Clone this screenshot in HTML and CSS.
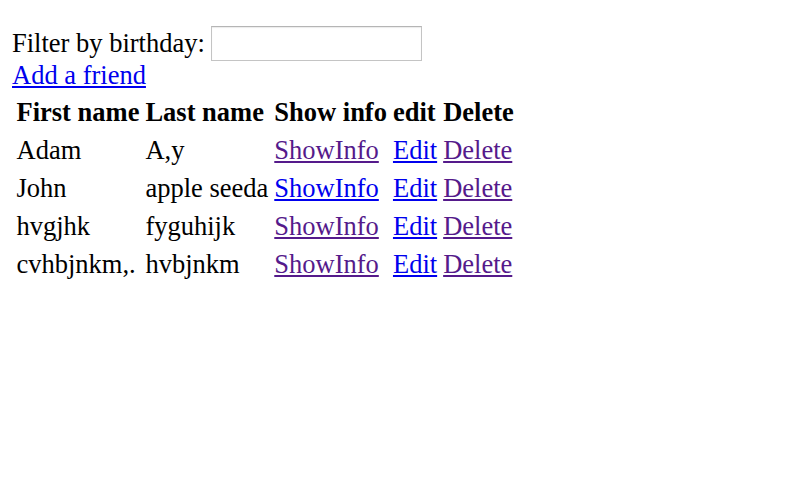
FILE: index.html
```html
<!DOCTYPE html>
<html>
<head>
<meta charset="utf-8">
<link rel="stylesheet" href="styles.css">
</head>
<body>
<div class="filter">
  <label class="filter-label">Filter by birthday:</label>
  <input class="filter-input" type="text">
</div>
<div class="add"><a class="link" href="#add">Add a friend</a></div>
<table class="friends">
  <tr>
    <th>First name</th><th>Last name</th><th>Show info</th><th>edit</th><th>Delete</th>
  </tr>
  <tr>
    <td>Adam</td><td>A,y</td>
    <td><a class="link visited" href="#s1">ShowInfo</a></td>
    <td><a class="link" href="#e1">Edit</a></td>
    <td><a class="link visited" href="#d1">Delete</a></td>
  </tr>
  <tr>
    <td>John</td><td>apple seeda</td>
    <td><a class="link" href="#s2">ShowInfo</a></td>
    <td><a class="link" href="#e2">Edit</a></td>
    <td><a class="link visited" href="#d2">Delete</a></td>
  </tr>
  <tr>
    <td>hvgjhk</td><td>fyguhijk</td>
    <td><a class="link visited" href="#s3">ShowInfo</a></td>
    <td><a class="link" href="#e3">Edit</a></td>
    <td><a class="link visited" href="#d3">Delete</a></td>
  </tr>
  <tr>
    <td>cvhbjnkm,.</td><td>hvbjnkm</td>
    <td><a class="link visited" href="#s4">ShowInfo</a></td>
    <td><a class="link" href="#e4">Edit</a></td>
    <td><a class="link visited" href="#d4">Delete</a></td>
  </tr>
</table>
</body>
</html>
```
FILE: styles.css
```css
html, body {
  background: #fff;
}
body {
  margin: 12px;
  font-family: "Liberation Serif", "Times New Roman", serif;
  font-size: 26.5px;
  color: #000;
}
.filter {
  display: flex;
  align-items: center;
  gap: 6px;
  margin-top: 14px;
  height: 35px;
}
.filter-label {
  line-height: 30px;
  margin-bottom: 2px;
}
.filter-input {
  box-sizing: border-box;
  width: 211px;
  height: 35px;
  margin: 0;
  border: 1px solid #c4c4c4;
  border-top-color: #b5b5b5;
  box-shadow: inset 0 1px 1px rgba(0,0,0,0.08);
  background: #fff;
  font: inherit;
}
.add {
  line-height: 30px;
  margin-top: -1px;
}
.link {
  color: #0000ee;
  text-decoration: underline;
}
.link.visited {
  color: #551a8b;
}
.friends {
  border-collapse: separate;
  border-spacing: 3px;
  margin-top: 1px;
}
.friends th,
.friends td {
  padding: 1.5px;
  line-height: 32px;
  text-align: left;
  white-space: nowrap;
  vertical-align: middle;
}
.friends th {
  font-weight: bold;
}
```
